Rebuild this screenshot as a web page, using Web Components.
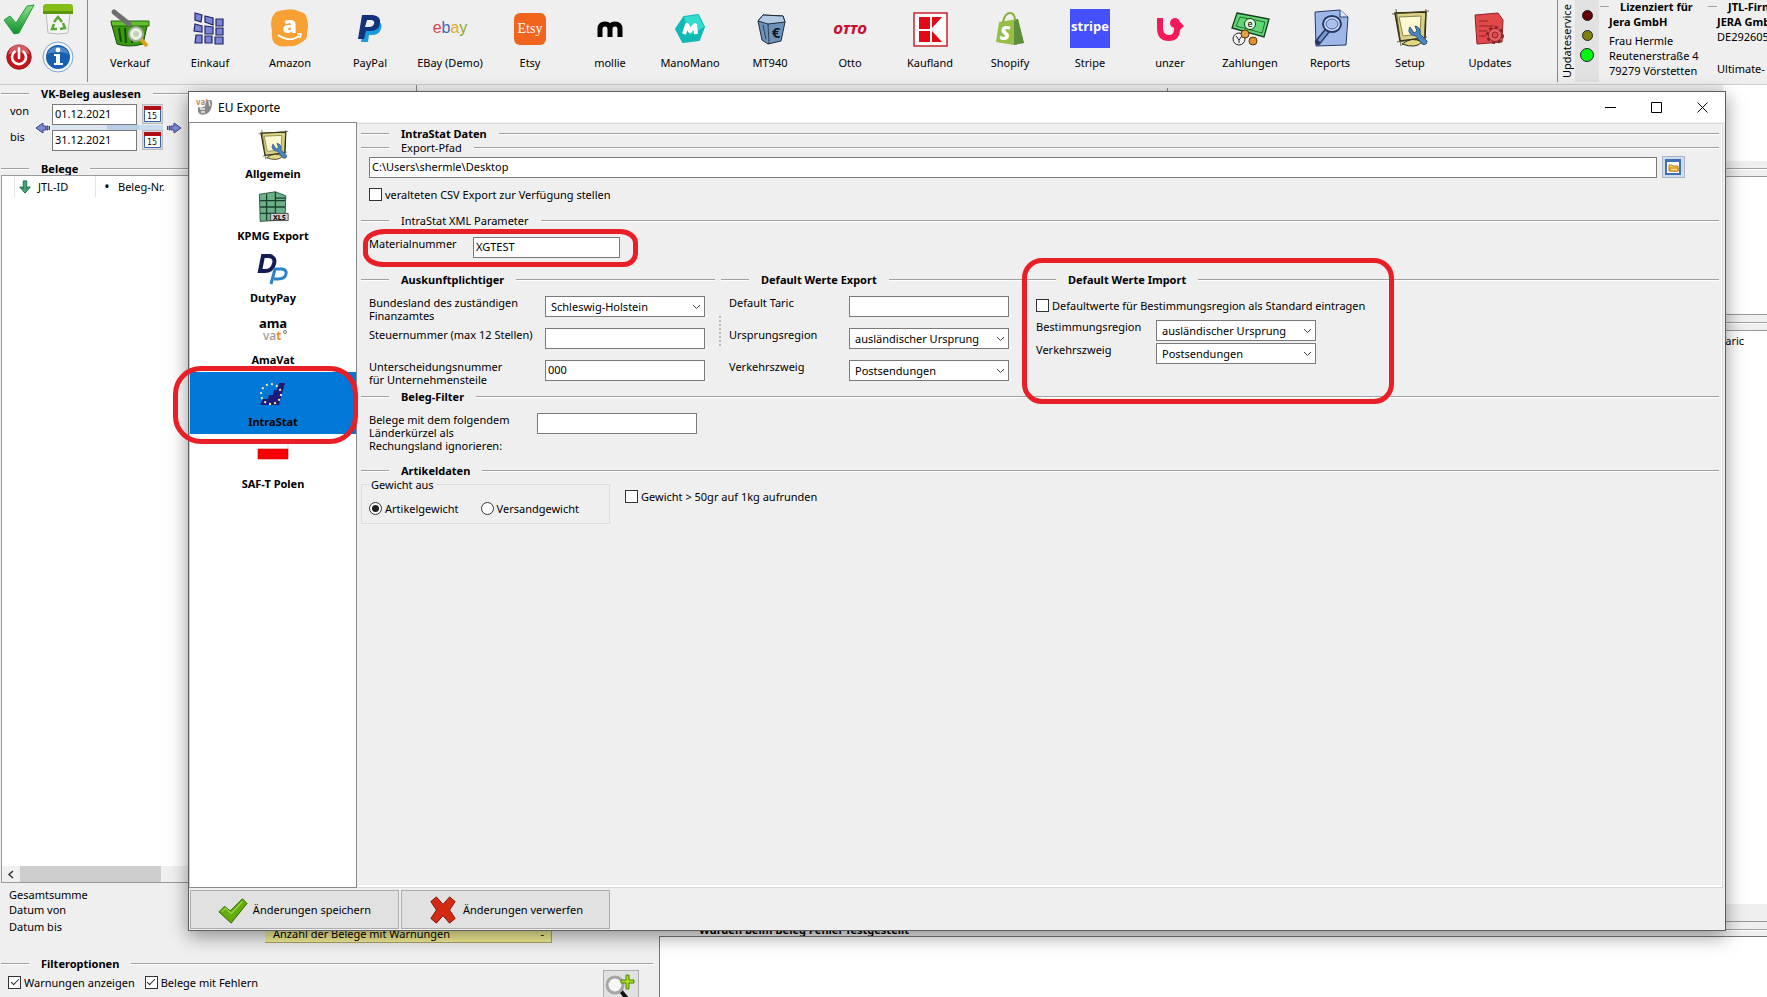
<!DOCTYPE html>
<html lang="de">
<head>
<meta charset="utf-8">
<title>EU Exporte</title>
<style>
body{margin:0;background:#efefef;color:#000;font:11px/13px "Noto Sans","Open Sans",sans-serif}
</style>
</head>
<body>
<erp-app></erp-app>

<script>
const SETUP = `<path d="M5 5 36 4 35 30 10 33z" fill="#d9d08a" stroke="#2e2b12" stroke-width="1.5"/><path d="M2 6 39 3M6 1 11 38M36 1 34 33M7 34 37 29" stroke="#4a4520" stroke-width=".8" fill="none"/><path d="M9 9 31 8 30 26 13 28z" fill="#fbf8d2" stroke="#8c8440"/><path d="M12 36q10-8 20-2-6 7-20 2z" fill="#e2d77e" stroke="#2e2b12"/><path d="M20 19q-3 5 2 8l4 1 6 8q5 2 5-3l-7-7q1-7-5-8l2 5-3 2z" fill="#4d86bb" stroke="#2a5784"/>`;
const ICONS = {
  check: ['0 0 32 32', `<defs><linearGradient id="g" x2="0" y2="1"><stop stop-color="#8be08a"/><stop offset="1" stop-color="#0f8f2c"/></linearGradient></defs><path d="M1 17 7 13 13 20 24 3 31 2 16 30 11 31z" fill="url(#g)" stroke="#2b9a3b"/>`],
  recycle: ['0 0 32 32', `<path d="M4 10h24l-2 20q-10 2-20 0z" fill="#f4f4f4" stroke="#bbb"/><path d="M1 4q0-3 3-3h24q3 0 3 3v7H1z" fill="#83bd16"/><path d="M1 8h30v3H1z" fill="#5c960c"/><g fill="none" stroke="#58a832" stroke-width="2.500"><path d="m12 19 4-5 4 5M21 20l2 5-5 1M15 26h-5l2-5"/></g>`],
  power: ['0 0 32 32', `<circle cx="16" cy="16" r="14" fill="#c8141c" stroke="#8d1115" /><path d="M4 13a12 12 0 0 1 24 0q-12-6-24 0z" fill="#fff" opacity=".3"/><path d="M11 10a8 8 0 1 0 10 0M16 6v11" fill="none" stroke="#fff" stroke-width="3" stroke-linecap="round"/>`],
  info: ['0 0 32 32', `<circle cx="16" cy="16" r="15" fill="#f5f5f5" stroke="#7ba3cf"/><circle cx="16" cy="16" r="12" fill="#1660b0"/><path d="M5 13a12 12 0 0 1 22 0q-11-4-22 0z" fill="#fff" opacity=".25"/><circle cx="16" cy="9" r="2.4" fill="#fff"/><path d="M12 13h6v9h3v2h-9v-2h2v-7h-2z" fill="#fff"/>`],
  sales: ['0 0 40 40', `<path d="M1 14h37l-5 22q-14 4-26 0z" fill="#3c9a12" stroke="#174d05"/><path d="M1 13h38v5H2z" fill="#63bf2c" stroke="#22640a"/><path d="M9 20l2 14M15 20l1 15M22 20v15" stroke="#174d05" stroke-width="2"/><path d="M4 4 19 16" stroke="#6e6e6e" stroke-width="5" stroke-linecap="round"/><path d="M29 29 37 38" stroke="#d9a514" stroke-width="4"/><circle cx="26" cy="26" r="7" fill="#eaf3e2" stroke="#9aa894" stroke-width="2"/><circle cx="26" cy="26" r="3" fill="#c5d2bd"/>`],
  purchase: ['0 0 40 40', `<g fill="#7c84d8" stroke="#20285f" stroke-width="1.2"><path d="M5 5l7 2-1 7-6-2zM15 8l8 2v7l-8-3zM26 11h7v7h-7zM5 16l7 2v6l-8-1zM15 18l8 1v7h-8zM26 20h7v7h-7zM6 27h6v8H5zM15 28h7v7h-7zM25 29h8v7h-8z"/></g>`],
  amazon: ['0 0 40 40', `<path d="M6 4q5-2 9-2 8-2 16 2 5 1 6 7 2 7 0 13 1 7-5 10-6 5-14 4-8 2-14-3-3-4-2-12Q-1 10 6 4z" fill="#f7a033"/><text x="20" y="25" text-anchor="middle" font-family="Open Sans" font-weight="800" font-size="23" fill="#fff">a</text><path d="M8 27q12 8 21 1M27 26l4 0-1 4" stroke="#fff" stroke-width="1.6" fill="none"/>`],
  paypal: ['0 0 40 40', `<path d="M14 12h13q6 3 4 9-2 6-9 6h-3l-1 7h-7z" fill="#1a9bdc"/><path d="M12 7h11q8 1 7 8-1 8-10 8h-4l-2 8H8z" fill="#14317c"/><path d="M17 12h5q3 1 2 4-1 3-5 3h-4z" fill="#efefef"/>`],
  ebay: ['0 0 40 40', `<text x="20" y="25" text-anchor="middle" font-family="Liberation Sans" font-size="16"><tspan fill="#d8484c">e</tspan><tspan fill="#3f68b8">b</tspan><tspan fill="#e3ad2b">a</tspan><tspan fill="#86ac2b">y</tspan></text>`],
  etsy: ['0 0 40 40', `<rect x="4" y="5" width="32" height="32" rx="6" fill="#f1641e"/><text x="20" y="25" text-anchor="middle" font-family="Liberation Serif" font-size="14" fill="#fff">Etsy</text>`],
  mollie: ['0 0 40 40', `<path d="M10 29v-8q0-5 5-5t5 5v8M20 29v-8q0-5 5-5t5 5v8" fill="none" stroke="#000" stroke-width="5"/>`],
  mano: ['0 0 40 40', `<path d="M14 9 28 7 34 19 29 32 13 34 6 21z" fill="#12b8b8" stroke="#12b8b8" stroke-width="2" stroke-linejoin="round"/><path d="M14 9 28 7 34 19 20 27z" fill="#35dccb"/><path d="M14 26l3-9 3 6 5-6 1 9" fill="none" stroke="#fff" stroke-width="4" stroke-linejoin="round"/>`],
  mt940: ['0 0 40 40', `<path d="M8 13 13 7 33 8 35 14 31 33 18 36 12 32z" fill="#6d92b8" stroke="#1c2b3c"/><path d="M8 13 13 7 33 8 35 14 18 16z" fill="#b2cbe2" stroke="#1c2b3c"/><path d="M18 16 19 36M13 17l3 14" stroke="#1c2b3c" stroke-width=".8"/><text x="26" y="30" text-anchor="middle" font-family="Noto Sans" font-weight="700" font-size="15" fill="#101820">€</text>`],
  otto: ['0 0 40 40', `<text x="20" y="26" text-anchor="middle" font-family="Open Sans" font-weight="800" font-style="italic" font-size="13" fill="#c8102e">OTTO</text>`],
  kaufland: ['0 0 40 40', `<rect x="4" y="5" width="33" height="33" fill="#fff" stroke="#c8242c" stroke-width="1.5"/><path d="M9 9h11v12H9zM9 23h11v11H9zM22 9h10L22 20zM22 23l10 11H22z" fill="#e10915"/>`],
  shopify: ['0 0 40 40', `<path d="M9 14 28 11 34 35 24 37 6 34z" fill="#95bf47"/><path d="M28 11 34 35 24 37V12z" fill="#5e8e3e"/><path d="M13 14q2-9 7-9t5 8" fill="none" stroke="#86ae40" stroke-width="2"/><text x="15" y="32" text-anchor="middle" font-family="Open Sans" font-weight="800" font-style="italic" font-size="19" fill="#fff">S</text>`],
  stripe: ['0 0 40 40', `<path d="M0 1h40v39H0z" fill="#4550fa"/><text x="20" y="23" text-anchor="middle" font-family="Open Sans" font-weight="700" font-size="13" fill="#fff">stripe</text>`],
  unzer: ['0 0 40 40', `<path d="M10 10v10q0 10 9 10 8 0 8-9v-6" fill="none" stroke="#f5195b" stroke-width="6"/><circle cx="25" cy="15" r="5" fill="#f5195b"/><path d="M25 12l5 2 4 4-4 4-5 2z" fill="#f5195b"/>`],
  payments: ['0 0 40 40', `<path d="M7 5 39 11 34 29 2 20z" fill="#5fd873" stroke="#163c1b" stroke-width="1.3"/><path d="M10 9 35 14 32 25 6 18z" fill="none" stroke="#163c1b" stroke-width=".7"/><circle cx="20" cy="16" r="5.5" fill="#dff8e2" stroke="#163c1b"/><text x="20" y="19" text-anchor="middle" font-family="Noto Sans" font-size="9">e</text><circle cx="9" cy="31" r="6" fill="#f1f1f1" stroke="#222"/><path d="M6 28l3 4 3-4M9 32v3" stroke="#222" fill="none"/><circle cx="15" cy="26" r="4" fill="#e0a043" stroke="#5b3607"/><circle cx="23" cy="33" r="4" fill="#dc9233" stroke="#5b3607"/>`],
  reports: ['0 0 40 40', `<path d="M5 4 30 2 38 9 36 37 6 38z" fill="#9db8e6" stroke="#273a66"/><path d="M30 2v7h8" fill="#dbe6fa" stroke="#273a66"/><path d="M17 23 8 34" stroke="#273a66" stroke-width="6" stroke-linecap="round"/><path d="M17 23 9 33" stroke="#7b97cf" stroke-width="3"/><ellipse cx="22" cy="16" rx="9" ry="8" fill="#cfddf6" stroke="#273a66" stroke-width="2"/><ellipse cx="22" cy="16" rx="6" ry="5" fill="#a9c1ec" stroke="#4460a0"/>`],
  setup: ['0 0 40 40', SETUP],
  updates: ['0 0 40 40', `<path d="M5 7 28 5 33 12 32 34 7 36z" fill="#e0484a" stroke="#8d2326"/><path d="M9 13h9M9 18h15M9 23h8M9 28h7" stroke="#8d2326"/><circle cx="25" cy="27" r="7.5" fill="#ea6062" stroke="#8d2326" stroke-width="3" stroke-dasharray="3.2 2.6"/><circle cx="25" cy="27" r="6.5" fill="#ea6062" stroke="#8d2326"/><circle cx="25" cy="27" r="3" fill="#e0484a" stroke="#8d2326"/>`],
  kpmg: ['0 0 40 40', `<path d="M3 4 23 1 36 6 35 36 4 38z" fill="#6db188" stroke="#18402a"/><path d="M23 1v8h13M4 12h31M4 20h31M4 28h20M12 4v33M23 9v20" stroke="#18402a" stroke-width="1.6" fill="none"/><path d="M17 28h22v9H17z" fill="#cfcfcf" stroke="#333"/><text x="28" y="36" text-anchor="middle" font-family="Noto Sans" font-weight="700" font-size="9">XLS</text>`],
  duty: ['0 0 32 32', `<path d="M6 3h7q6 2 4 8-2 7-9 7H3z" fill="none" stroke="#121b54" stroke-width="4"/><path d="M14 31 18 16h7q5 1 4 5-1 5-8 5h-4" fill="none" stroke="#2a82c9" stroke-width="3"/>`],
  ama: ['0 0 32 32', `<text x="16" y="13" text-anchor="middle" font-family="Noto Sans" font-weight="700" font-size="13">ama</text><text x="6" y="25" font-family="Noto Sans" font-size="12" font-weight="500" fill="#999">va<tspan fill="#ef8d1c" font-weight="700">t</tspan></text><circle cx="28" cy="17" r="1.5" fill="none" stroke="#777"/>`],
  intrastat: ['0 0 32 32', `<path d="M3 28 6 22h5l1-4h4l1-5h3l2-7h6l-6 22z" fill="#1d1a78"/><circle cx="14" cy="17" r="10" fill="none" stroke="#f0eda0" stroke-width="2" stroke-dasharray="2 3.200"/>`],
  poland: ['0 0 32 32', `<path d="M31 5v6" stroke="#ddd"/><path d="M1 10h30v10H1z" fill="#f80000" stroke="#c00" stroke-width=".6"/>`],
  left: ['0 0 16 16', `<path d="M1 8 8 3v3h3v4H8v3zM12 6h1v4h-1zM14.500 6v4" fill="#7c8bd0" stroke="#3a468c"/>`],
  right: ['0 0 16 16', `<path d="M15 8 8 3v3H5v4h3v3zM3 6h1v4H3zM1.500 6v4" fill="#7c8bd0" stroke="#3a468c"/>`],
  down: ['0 0 16 16', `<path d="M8 15 2 8h3l1 2V1h4v9l1-2h3z" fill="#3fa877" stroke="#176043"/>`],
  calendar: ['0 0 21 20', `<path d="M2.500 2.500h16v15h-16z" fill="#fff" stroke="#3b63a0"/><path d="M2 2h17v4H2z" fill="#b01015"/><text x="10" y="15" text-anchor="middle" font-family="DejaVu Sans" font-size="8" fill="#111">15</text>`],
  folder: ['0 0 21 20', `<path d="M3 3h14v14H3z" fill="#fff" stroke="#3f6fb5" stroke-width="2"/><path d="M2 2h16v3H2z" fill="#3f6fb5"/><path d="M6 14V8h3l1 1h5v5z" fill="#fbd35a" stroke="#c07a10"/><path d="M7 14v-3h8v3z" fill="#fde07d" stroke="#c07a10"/>`],
  appicon: ['0 0 18 18', `<text x="0" y="7" font-family="Noto Sans" font-weight="700" font-size="8" fill="#b98a5c">vat</text><path d="M10 4q7-5 6 3-1 7-6 9-6 2-8-2V9q4 2 7-1z" fill="#888"/><path d="M4 11h5M5 14h4M13 3l1 5" stroke="#eee" stroke-width="1.4"/>`],
  save: ['0 0 32 32', `<path d="M1 18 7 12 13 17 26 4 31 9 14 30z" fill="#62ab10" stroke="#2f6605"/><path d="M4 18l4-4 6 6L26 7" fill="none" stroke="#94d43d" stroke-width="1.500"/>`],
  discard: ['0 0 32 32', `<path d="M3 7 9 2l7 8 7-8 6 5-6 9 6 9-6 5-7-8-7 8-6-5 6-9z" fill="#d42a12" stroke="#7d1204"/>`],
  zoomadd: ['0 0 32 32', `<path d="M16 18 29 34" stroke="#111" stroke-width="4"/><circle cx="11" cy="13" r="8" fill="#f6f6f6" stroke="#a5a5a5" stroke-width="3"/><path d="M22 3h3v5h5v3h-5v6h-3v-6h-5V8h5z" fill="#a6dc1f" stroke="#4e8506"/>`]
};

function define(name, template) {
  const t = document.createElement('template');
  customElements.define(name, class extends HTMLElement {
    connectedCallback() {
      if (this.shadowRoot) return;
      const root = this.attachShadow({mode: 'open'});
      t.innerHTML = typeof template === 'function' ? template(n => this.getAttribute(n) || '', this) : template;
      root.append(t.content.cloneNode(true));
    }
  });
}
const BTN = 'button{font:inherit;color:inherit;background:none;border:0;padding:0;margin:0}';

define('ui-icon', a => { const [vb, body] = ICONS[a('name')]; return `<style>:host{display:block;width:40px;height:40px;flex:none}svg{display:block;width:100%;height:100%}</style><svg viewBox="${vb}" aria-hidden="true">${body}</svg>`; });

define('tool-item', a => `<style>:host{display:block;width:80px;flex:none}${BTN}
button{width:100%;display:flex;flex-direction:column;align-items:center;gap:8px;padding-top:8px;white-space:nowrap}</style>
<button type="button"><ui-icon name="${a('icon')}"></ui-icon><slot></slot></button>`);

define('group-rule', `<style>:host{display:flex;align-items:center;height:14px;gap:12px;white-space:nowrap;font-weight:700}
:host([light]){font-weight:400}
i{height:1px;background:#a0a0a0;box-shadow:0 1px #fff;width:28px;flex:none}i.r{flex:1 1 0;width:auto}</style><i></i><span><slot></slot></span><i class="r"></i>`);

const FIELD = `:host{display:grid;grid-template-columns:var(--label,120px) var(--field,160px);align-items:start}
label{white-space:pre-line}
input,select{box-sizing:border-box;width:100%;height:21px;border:1px solid #7a7a7a;border-radius:0;background:#fff;color:#000;font:inherit;margin:0;outline:0;appearance:none}
input{padding:0 2px 2px}select{padding:0 16px 0 5px;line-height:17px;grid-area:1/1}`;
define('text-field', a => `<style>${FIELD}</style><label for="f">${a('label')}</label><input id="f" type="text" value="${a('value')}">`);
define('select-field', a => `<style>${FIELD}.box{display:grid}svg{grid-area:1/1;justify-self:end;align-self:center;width:9px;height:6px;margin-right:4px;pointer-events:none}</style>
<label for="f">${a('label')}</label><div class="box"><select id="f"><option>${a('value')}</option></select><svg viewBox="0 0 9 6"><path d="M1 1l3.500 3.500L8 1" fill="none" stroke="#444"/></svg></div>`);

define('check-field', (a, el) => `<style>:host{display:inline-flex}label{display:flex;align-items:center;gap:3px;white-space:nowrap}
input{appearance:none;width:13px;height:13px;margin:0;border:1px solid #333;background:#fff;display:grid;place-items:center}
input[type=radio]{border-radius:50%}
input[type=radio]:checked::before{content:"";width:7px;height:7px;border-radius:50%;background:#222}
input[type=checkbox]:checked::before{content:"";width:7px;height:3px;border:solid #222;border-width:0 0 1px 1px;rotate:-45deg;margin-bottom:3px}</style>
<label><input type="${a('type') || 'checkbox'}" name="${a('name') || 'option'}"${el.hasAttribute('checked') ? ' checked' : ''}><slot></slot></label>`);

define('side-item', a => `<style>:host{display:block;height:62px;font-weight:700}:host([selected]){background:#0078d7}${BTN}
button{width:100%;height:100%;display:flex;flex-direction:column;align-items:center;gap:6px;padding-top:5px;box-sizing:border-box;justify-content:flex-start}
ui-icon{width:32px;height:32px}</style><button type="button"><ui-icon name="${a('icon')}"></ui-icon><slot></slot></button>`);

define('red-mark', `<style>:host{position:absolute;pointer-events:none;box-sizing:border-box;border:5px solid #e81f27;border-radius:var(--round,20px)}</style>`);

define('service-lights', `<style>:host{display:flex;height:82px}
.t{writing-mode:vertical-rl;rotate:180deg;width:17px;line-height:17px;text-align:center}
.l{width:24px;background:#e2e2e2;display:flex;flex-direction:column;align-items:center;padding-top:10px;gap:9px;box-sizing:border-box;margin-right:1px}
i{width:9px;height:9px;border:1px solid #222;border-radius:50%;background:var(--c)}i.on{width:12px;height:12px;margin-top:-2px}</style>
<div class="t">Updateservice</div><div class="l"><i style="--c:#640000"></i><i style="--c:#84800e"></i><i class="on" style="--c:#00f714"></i></div>`);

define('licence-block', a => `<style>:host{display:block;flex:none;white-space:nowrap}
header{display:flex;align-items:center;gap:11px;height:12px;font-weight:700}
header::before{content:"";width:9px;height:1px;background:#a0a0a0}
.b{padding:2px 0 0 9px;line-height:15px}</style><header>${a('heading')}</header><div class="b"><slot></slot></div>`);

define('app-toolbar', `<style>:host{display:flex;height:84px;border-bottom:1px solid #ccc;overflow:hidden;flex:none}${BTN}
.sys{display:grid;grid-template-columns:32px 32px;grid-auto-rows:32px;column-gap:7px;row-gap:6px;padding:3px 13px 0 3px;border-right:1px solid #888;height:79px;flex:none}
.sys ui-icon{width:32px;height:32px}.sys .s{width:28px;height:28px;margin:2px}
.tools{display:flex;flex:1;padding-left:2px;min-width:0;overflow:hidden}
.info{width:209px;height:82px;flex:none;border-left:1px solid #888;display:flex;overflow:hidden}
b{display:block}
.lic{width:108px}p{margin:4px 0 0}.g{height:17px}</style>
<div class="sys"><button type="button" aria-label="Übernehmen"><ui-icon name="check"></ui-icon></button><button type="button" aria-label="Papierkorb"><ui-icon name="recycle"></ui-icon></button><button type="button" aria-label="Beenden"><ui-icon class="s" name="power"></ui-icon></button><button type="button" aria-label="Info"><ui-icon name="info"></ui-icon></button></div>
<nav class="tools">
<tool-item icon="sales">Verkauf</tool-item><tool-item icon="purchase">Einkauf</tool-item><tool-item icon="amazon">Amazon</tool-item><tool-item icon="paypal">PayPal</tool-item><tool-item icon="ebay">EBay (Demo)</tool-item><tool-item icon="etsy">Etsy</tool-item><tool-item icon="mollie">mollie</tool-item><tool-item icon="mano">ManoMano</tool-item><tool-item icon="mt940">MT940</tool-item><tool-item icon="otto">Otto</tool-item><tool-item icon="kaufland">Kaufland</tool-item><tool-item icon="shopify">Shopify</tool-item><tool-item icon="stripe">Stripe</tool-item><tool-item icon="unzer">unzer</tool-item><tool-item icon="payments">Zahlungen</tool-item><tool-item icon="reports">Reports</tool-item><tool-item icon="setup">Setup</tool-item><tool-item icon="updates">Updates</tool-item>
</nav>
<div class="info"><service-lights></service-lights>
<licence-block class="lic" heading="Lizenziert für"><b>Jera GmbH</b><p>Frau Hermle<br>Reutenerstraße 4<br>79279 Vörstetten</p></licence-block>
<licence-block heading="JTL-Firma"><b>JERA GmbH</b>DE292605<div class="g"></div>Ultimate-</licence-block></div>`);

define('date-range', `<style>:host{display:grid;grid-template-columns:24px 16px 85px 21px 16px;column-gap:1px;row-gap:5px;padding:4px 0 0 9px;align-items:start}${BTN}
.arr{grid-row:1/3;align-self:center}.arr ui-icon{width:16px;height:16px}
input{box-sizing:border-box;width:85px;height:21px;border:1px solid #7a7a7a;font:inherit;padding:0 2px 2px;margin:0;background:#fff}
.cal{margin-left:4px;width:21px;height:20px;background:#d9d9e4;outline:1px solid #bbb;outline-offset:-1px}.cal ui-icon{width:21px;height:20px}
.arr.r{margin-left:6px}
label{grid-column:1}.i{grid-column:3}.c{grid-column:4}.a{grid-row:1}.z{grid-row:2}
.bar{grid-area:1/3/3/5;align-self:center;height:5px;margin-right:-4px;background:linear-gradient(90deg,#dbe5f0 50%,#b9cfe6 50% 78%,#cbdcee 78%)}</style>
<label class="a" for="v">von</label><button class="arr" style="grid-column:2" type="button" aria-label="Zurück"><ui-icon name="left"></ui-icon></button><div class="bar"></div><input class="i a" id="v" value="01.12.2021"><button class="c a cal" type="button" aria-label="Kalender von"><ui-icon name="calendar"></ui-icon></button>
<label class="z" for="b">bis</label><input class="i z" id="b" value="31.12.2021"><button class="c z cal" type="button" aria-label="Kalender bis"><ui-icon name="calendar"></ui-icon></button><button class="arr r" style="grid-column:5" type="button" aria-label="Vor"><ui-icon name="right"></ui-icon></button>`);

define('receipt-list', `<style>:host{display:flex;flex-direction:column;background:#fff;border:1px solid #999;border-right:0;overflow:hidden}
table{border-collapse:collapse;width:100%;table-layout:fixed}th{font-weight:400;text-align:left;height:21px;padding:0;border-right:1px solid #e5e5e5}
.f{width:12px}.j{width:80px}.n{width:auto}
th span{display:flex;align-items:center}ui-icon{width:14px;height:14px;margin:0 6px 0 3px}
th .dot{display:block;width:22px;text-align:center;font-size:14px}
.sp{flex:1}.sb{height:16px;background:#f0f0f0;display:flex;align-items:center}.sb svg{width:8px;height:9px;margin:0 5px}.sb i{width:141px;height:16px;background:#cdcdcd}</style>
<table><thead><tr><th class="f" aria-label="Auswahl"></th><th class="j"><span><ui-icon name="down"></ui-icon>JTL-ID</span></th><th class="n"><span><span class="dot">•</span>Beleg-Nr.</span></th></tr></thead></table>
<div class="sp"></div><div class="sb"><svg viewBox="0 0 8 9"><path d="M6 1 2 4.500 6 8" fill="none" stroke="#333" stroke-width="1.500"/></svg><i></i></div>`);

define('left-column', `<style>:host{display:flex;flex-direction:column;width:655px;flex:none;min-height:0}${BTN}
.top{flex:1;min-height:0;width:415px;border-right:1px solid #888;display:flex;flex-direction:column;padding-left:1px}
receipt-list{flex:1;min-height:0}
.r1{margin-top:1px}.r2{margin-top:10px}
.sum{display:grid;grid-template-columns:256px 287px;padding:4px 0 0 9px;line-height:15px;height:56px;grid-template-rows:15px 15px 26px}
.w{grid-area:3/2;align-self:end;background:#f2ee96;border:1px solid #aaa56a;border-width:0 1px 1px 0;height:21px;padding:4px 7px 0 8px;line-height:16px;display:flex;justify-content:space-between;box-sizing:border-box}
.d{grid-area:3/1;padding-top:2px}
.low{height:54px;padding:0 2px 0 1px}
.f{margin-top:13px}
.fr{display:flex;gap:10px;padding:4px 0 0 7px;align-items:flex-start}
check-field{margin-top:2px}
.z{margin-left:auto;width:36px;height:36px;background:#e1e1e1;border:1px solid #adadad;display:block;margin-top:-4px;margin-right:14px}
.z ui-icon{width:32px;height:32px}</style>
<div class="top"><group-rule class="r1">VK-Beleg auslesen</group-rule><date-range></date-range><group-rule class="r2">Belege</group-rule><receipt-list></receipt-list></div>
<div class="sum"><div>Gesamtsumme</div><div style="grid-column:1">Datum von</div><div class="d">Datum bis</div><div class="w"><span>Anzahl der Belege mit Warnungen</span><span>-</span></div></div>
<div class="low"><group-rule class="f">Filteroptionen</group-rule><div class="fr"><check-field checked>Warnungen anzeigen</check-field><check-field checked>Belege mit Fehlern</check-field><button class="z" type="button" aria-label="Suche hinzufügen"><ui-icon name="zoomadd"></ui-icon></button></div></div>`);

define('right-column', `<style>:host{display:flex;flex-direction:column;flex:1;min-width:0}
.u{flex:1;display:flex;min-height:0}.l{width:508px;border-right:1px solid #888;margin-top:3px}.r{width:44px;margin-left:auto;display:flex;flex-direction:column}
.p{background:#fff;border-bottom:1px solid #999}.p1{height:76px;border:0}.p2{height:137px;border-top:1px solid #999}.p3{flex:1;border-top:1px solid #999;border-bottom:0}
.g{height:15px;display:flex;align-items:center}.g::before{content:"";flex:1;height:1px;background:#a0a0a0;box-shadow:0 1px #fff}
.s{height:17px;border-bottom:1px solid #999}
table{border-collapse:collapse;margin-left:-3px}th{font-weight:400;padding:3px 0 0}
.e{height:61px;background:#fff;border:1px solid #777;border-width:1px 0 0 1px;flex:none;box-sizing:border-box}</style>
<div class="u"><div class="l"></div><div class="r"><div class="p p1"></div><div class="g"></div><div class="p p2"></div><div class="g"></div><div class="p p3"><table><thead><tr><th>Taric</th></tr></thead></table></div><div class="s"></div></div></div>
<group-rule>Wurden beim Beleg Fehler festgestellt</group-rule><div class="e"></div>`);

define('side-nav', `<style>:host{display:block;width:166px;flex:none;background:#fff;border:1px solid #888;border-left-color:#ccc;padding-top:1px;position:relative}
red-mark{left:-17px;width:185px;top:243px;height:78px;--round:28px}</style>
<side-item icon="setup">Allgemein</side-item><side-item icon="kpmg">KPMG Export</side-item><side-item icon="duty">DutyPay</side-item><side-item icon="ama">AmaVat</side-item><side-item icon="intrastat" selected>IntraStat</side-item><side-item icon="poland">SAF-T Polen</side-item><red-mark></red-mark>`);

define('intrastat-form', `<style>:host{display:block;flex:1;min-width:0;border:1px solid #d8d8d8;border-left-color:#efefef;box-shadow:inset -1px -2px #fff;margin:1px 2px 0 0;padding:2px 3px 0 3px}${BTN}
.in{padding-left:8px}
.path{display:flex;gap:6px;padding-top:3px;padding-right:35px}
.path input{flex:1;min-width:0;height:21px;box-sizing:border-box;border:1px solid #7a7a7a;background:#fff;font:inherit;padding:0 2px 2px}
.path ui-icon{width:21px;height:20px}.path button{background:#cfdcf0;outline:1px solid #a9b5c8;height:20px}
.csv{padding-top:10px;height:25px}
.mat{position:relative;padding-top:10px;padding-bottom:14px;--label:104px;--field:147px}
.mat red-mark{left:2px;top:2px;width:275px;height:38px;--round:22px 18px 14px 20px / 14px}
.cols{display:grid;grid-template-columns:360px 307px minmax(0,1fr);height:117px}
.c{position:relative}.c .in{display:grid;row-gap:11px;padding-top:10px;grid-auto-rows:21px}
.c1{--label:176px}.c1 group-rule{margin-right:6px}
.grip{position:absolute;right:0;top:44px;height:30px;border-left:2px dotted #bbb}
.c .in.im{row-gap:2px;grid-template-rows:22px 21px 21px}
.im check-field{align-self:start;margin-top:3px}
.c3 red-mark{left:-6px;top:-14px;width:372px;height:146px;--round:20px}
.bf{padding-top:10px;height:50px;--label:168px}
.art{display:flex;align-items:flex-start;gap:15px;padding-top:1px}
fieldset{margin:0;border:1px solid #dcdcdc;width:249px;height:46px;box-sizing:border-box;padding:11px 0 0 7px;display:flex;align-items:flex-start;gap:22px}
legend{padding:0 2px;margin:0}.art>check-field{margin-top:12px}</style>
<group-rule>IntraStat Daten</group-rule><group-rule light>Export-Pfad</group-rule>
<div class="in path"><input aria-label="Export-Pfad" value="C:\\Users\\shermle\\Desktop"><button type="button" aria-label="Ordner wählen"><ui-icon name="folder"></ui-icon></button></div>
<div class="in csv"><check-field>veralteten CSV Export zur Verfügung stellen</check-field></div>
<group-rule light>IntraStat XML Parameter</group-rule>
<div class="in mat"><text-field label="Materialnummer" value="XGTEST"></text-field><red-mark></red-mark></div>
<div class="cols">
<section class="c c1"><group-rule>Auskunftplichtiger</group-rule><div class="in"><select-field label="Bundesland des zuständigen&#10;Finanzamtes" value="Schleswig-Holstein"></select-field><text-field label="Steuernummer (max 12 Stellen)"></text-field><text-field label="Unterscheidungsnummer&#10;für Unternehmensteile" value="000"></text-field></div><div class="grip"></div></section>
<section class="c"><group-rule>Default Werte Export</group-rule><div class="in"><text-field label="Default Taric"></text-field><select-field label="Ursprungsregion" value="ausländischer Ursprung"></select-field><select-field label="Verkehrszweig" value="Postsendungen"></select-field></div></section>
<section class="c c3"><group-rule>Default Werte Import</group-rule><div class="in im"><check-field>Defaultwerte für Bestimmungsregion als Standard eintragen</check-field><select-field label="Bestimmungsregion" value="ausländischer Ursprung"></select-field><select-field label="Verkehrszweig" value="Postsendungen"></select-field></div><red-mark></red-mark></section>
</div>
<group-rule>Beleg-Filter</group-rule>
<div class="in bf"><text-field label="Belege mit dem folgendem&#10;Länderkürzel als&#10;Rechungsland ignorieren:"></text-field></div>
<group-rule>Artikeldaten</group-rule>
<div class="art"><fieldset><legend>Gewicht aus</legend><check-field type="radio" name="gewicht" checked>Artikelgewicht</check-field><check-field type="radio" name="gewicht">Versandgewicht</check-field></fieldset><check-field>Gewicht &gt; 50gr auf 1kg aufrunden</check-field></div>`);

define('export-dialog', `<style>:host{position:absolute;left:188px;right:41px;top:91px;bottom:66px;border:1px solid #5f5f5f;background:#efefef;display:flex;flex-direction:column;box-shadow:0 5px 18px rgba(0,0,0,.42)}${BTN}
header{height:30px;background:#fff;display:flex;align-items:center;padding-left:7px;font-size:12px}
header ui-icon{width:18px;height:18px}header span{flex:1;padding-left:4px}
header button{width:46px;height:30px;display:grid;place-items:center}header svg{width:11px;height:11px}
.m{flex:1;display:flex;min-height:0}
footer{display:flex;gap:2px;padding:2px 0 1px 1px;height:39px}
footer button{width:209px;border:1px solid #adadad;background:#e1e1e1;display:flex;align-items:center;justify-content:center;gap:5px}
footer ui-icon{width:30px;height:30px}</style>
<header><ui-icon name="appicon"></ui-icon><span>EU Exporte</span><button type="button" aria-label="Minimieren"><svg viewBox="0 0 11 11"><path d="M0 5.500h11" stroke="#000"/></svg></button><button type="button" aria-label="Maximieren"><svg viewBox="0 0 11 11"><path d="M.5.5h10v10H.5z" fill="none" stroke="#000"/></svg></button><button type="button" aria-label="Schließen"><svg viewBox="0 0 11 11"><path d="M.5.5l10 10M10.500.5l-10 10" stroke="#000"/></svg></button></header>
<div class="m"><side-nav></side-nav><intrastat-form></intrastat-form></div>
<footer><button type="button"><ui-icon name="save"></ui-icon>Änderungen speichern</button><button type="button"><ui-icon name="discard"></ui-icon>Änderungen verwerfen</button></footer>`);

define('erp-app', `<style>:host{display:flex;flex-direction:column;height:100vh;position:relative;overflow:hidden}
.b{flex:1;display:flex;gap:4px;min-height:0}</style>
<app-toolbar></app-toolbar><div class="b"><left-column></left-column><right-column></right-column></div><export-dialog role="dialog" aria-label="EU Exporte"></export-dialog>`);
</script>
</body>
</html>
